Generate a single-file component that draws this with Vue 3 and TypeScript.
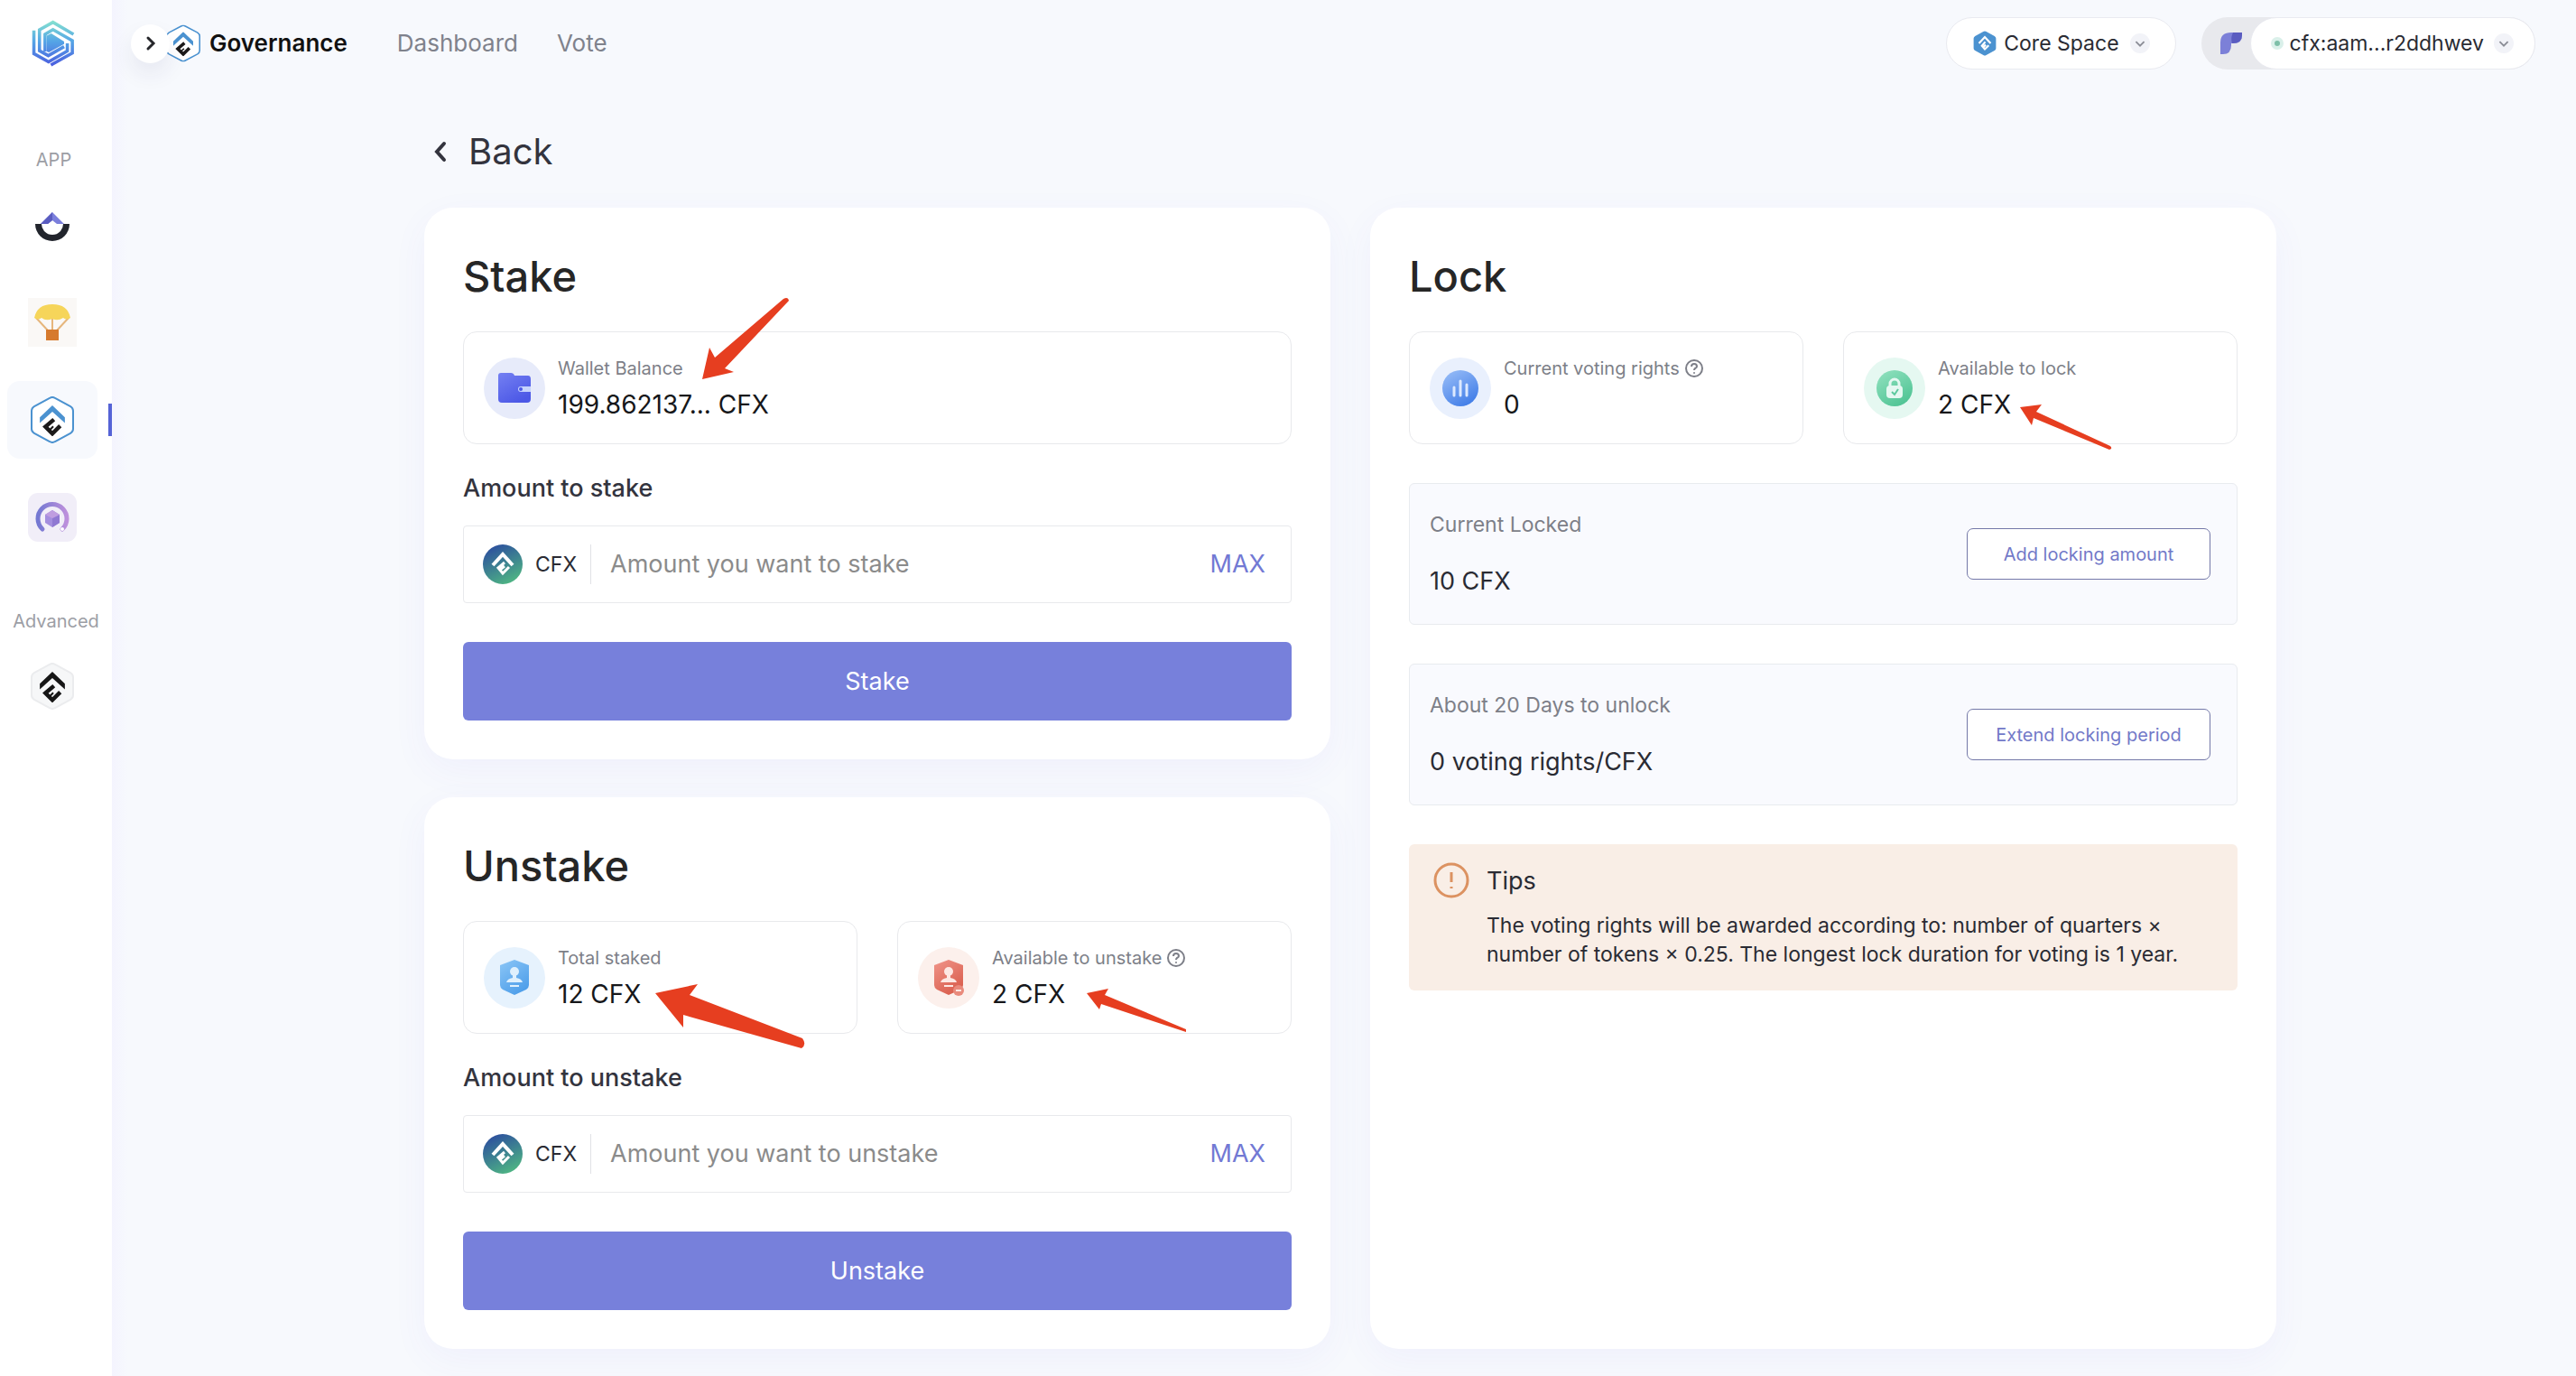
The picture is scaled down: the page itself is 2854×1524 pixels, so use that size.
<script setup lang="ts">
import { ref } from 'vue'

interface Panel {
  id: string
  title: string
  placeholder: string
}

const stakePanel: Panel = { id: 'stake', title: 'Stake', placeholder: 'Amount you want to stake' }
const unstakePanel: Panel = { id: 'unstake', title: 'Unstake', placeholder: 'Amount you want to unstake' }

const stakeAmount = ref('')
const unstakeAmount = ref('')

const lockRows = [
  { label: 'Current Locked', value: '10 CFX', action: 'Add locking amount' },
  { label: 'About 20 Days to unlock', value: '0 voting rights/CFX', action: 'Extend locking period' },
]
</script>

<template>
  <svg class="defs" width="0" height="0" aria-hidden="true">
    <defs>
      <linearGradient id="g-logo" gradientUnits="userSpaceOnUse" x1="128" y1="34" x2="128" y2="192">
        <stop offset="0" stop-color="#86e3cf" />
        <stop offset="0.45" stop-color="#55a5e6" />
        <stop offset="1" stop-color="#4a5ade" />
      </linearGradient>
      <linearGradient id="g-coin" x1="0.2" y1="0" x2="0.7" y2="1">
        <stop offset="0" stop-color="#2b4b9f" />
        <stop offset="1" stop-color="#4fb783" />
      </linearGradient>
      <linearGradient id="g-ring" x1="0" y1="0" x2="1" y2="0">
        <stop offset="0" stop-color="#7478d2" />
        <stop offset="1" stop-color="#bd90dc" />
      </linearGradient>
      <linearGradient id="g-wallet" x1="0" y1="0" x2="0.6" y2="1">
        <stop offset="0" stop-color="#7480f2" />
        <stop offset="1" stop-color="#4c58e6" />
      </linearGradient>
      <linearGradient id="g-blue" x1="0" y1="0" x2="0.6" y2="1">
        <stop offset="0" stop-color="#9cc0f8" />
        <stop offset="1" stop-color="#4580e8" />
      </linearGradient>
      <linearGradient id="g-green" x1="0" y1="0" x2="0.6" y2="1">
        <stop offset="0" stop-color="#93e2c0" />
        <stop offset="1" stop-color="#52c596" />
      </linearGradient>
      <linearGradient id="g-sky" x1="0" y1="0" x2="0.6" y2="1">
        <stop offset="0" stop-color="#8cc6f6" />
        <stop offset="1" stop-color="#4f9fea" />
      </linearGradient>
      <linearGradient id="g-red" x1="0" y1="0" x2="0.6" y2="1">
        <stop offset="0" stop-color="#f0958a" />
        <stop offset="1" stop-color="#da5f4e" />
      </linearGradient>
      <symbol id="mark" viewBox="0 0 80 98">
        <path class="roof" d="M0 38 40 0 80 38V56L40 20 0 56Z" />
        <path class="cee" d="M45 45 18 68 40 90 65 65" fill="none" stroke-width="13" />
        <path class="cee" d="M33 77 43 67" fill="none" stroke-width="6" />
      </symbol>
      <symbol id="hex" viewBox="0 0 48 52">
        <path d="M21 2Q24 0 27 2L44 11Q47 13 47 16V36Q47 39 44 41L27 50Q24 52 21 50L4 41Q1 39 1 36V16Q1 13 4 11Z" />
      </symbol>
      <symbol id="question" viewBox="0 0 20 20">
        <circle cx="10" cy="10" r="9" fill="none" stroke="#7d7f88" stroke-width="2" />
        <path d="M7 8Q7 5 10 5T13 8Q13 9 11 10Q10 11 10 12" fill="none" stroke="#7d7f88" stroke-width="2" />
        <circle cx="10" cy="15" r="1" fill="#7d7f88" />
      </symbol>
      <symbol id="chevron-disc" viewBox="0 0 24 24">
        <circle cx="12" cy="12" r="12" fill="#f2f3f8" />
        <path d="M7 10 12 15 17 10" fill="none" stroke="#8b8d96" stroke-width="2" />
      </symbol>
      <symbol id="coin" viewBox="0 0 44 44">
        <circle cx="22" cy="22" r="22" fill="url(#g-coin)" />
        <path d="M11 23 22 11 33 23" fill="none" stroke="#fff" stroke-width="4" />
        <path d="M24 20 17 26 22 32 29 25M19 28 24 24" fill="none" stroke="#fff" stroke-width="3" />
      </symbol>
    </defs>
  </svg>

  <div class="page">
    <aside class="sidebar">
      <a class="logo" href="#" aria-label="Home">
        <svg width="48" height="52" viewBox="56 32 146 160">
          <g fill="none" stroke="url(#g-logo)" stroke-width="11">
            <path d="M63 68V147L113 175 177 138V112" />
            <path d="M121 186 194 145V103L128 65 101 81V140" />
            <path d="M198 81 128 40 82 66V137L112 154 166 123" />
          </g>
          <path d="M107 140V86L122 78 166 106V114L114 143Z" fill="url(#g-logo)" />
        </svg>
      </a>
      <p class="group app-group">APP</p>
      <nav class="apps" aria-label="Apps">
        <a class="tile" href="#" aria-label="Web3 paywall">
          <svg width="38" height="40" viewBox="0 -6 38 40">
            <path d="M19 0 32 13H24L19 9 14 13H6Z" fill="#7b7fdc" />
            <path d="M19 0 6 13H14L19 9Z" fill="#5a5cc0" />
            <path d="M0 13H7A12 12 0 0 0 31 13H38A19 19 0 0 1 0 13Z" fill="#22252d" />
          </svg>
        </a>
        <a class="tile" href="#" aria-label="Airdrop">
          <svg width="54" height="54" viewBox="0 0 54 54">
            <rect width="54" height="54" fill="#faf8f6" />
            <path d="M9 22 22 36M45 22 32 36M27 22V37" fill="none" stroke="#e6b67c" stroke-width="2" />
            <path d="M7 22Q10 7 27 7T47 22Q43 25 39 22Q33 26 27 23Q20 26 15 22Q11 25 7 22Z" fill="#f6d55a" />
            <rect x="20" y="35" width="14" height="12" fill="#d67a2e" />
          </svg>
        </a>
        <a class="tile active" href="#" aria-label="Governance" aria-current="page">
          <svg width="48" height="52" viewBox="0 0 48 52">
            <use href="#hex" class="hex-blue" />
            <use href="#mark" class="mark-duo" x="10" y="10" width="28" height="34" />
          </svg>
        </a>
        <a class="tile" href="#" aria-label="Relayer">
          <svg width="54" height="54" viewBox="0 0 54 54">
            <rect width="54" height="54" rx="11" fill="#f1eef8" />
            <path d="M16 40A16 16 0 1 1 38 40" fill="none" stroke="url(#g-ring)" stroke-width="5" stroke-linecap="round" />
            <path d="M27 19 35 24V33L27 38 19 33V24Z" fill="#a48ede" />
            <path d="M27 28V38L35 33V24Z" fill="#8f78d2" />
            <path d="M27 19 35 24 27 28 19 24Z" fill="#bf9de0" />
            <circle cx="38" cy="40" r="2" fill="#fff" />
          </svg>
        </a>
      </nav>
      <p class="group advanced-group">Advanced</p>
      <nav aria-label="Advanced">
        <a class="tile" href="#" aria-label="Conflux">
          <svg width="48" height="52" viewBox="0 0 48 52">
            <use href="#hex" class="hex-gray" />
            <use href="#mark" class="mark-dark" x="10" y="10" width="28" height="34" />
          </svg>
        </a>
      </nav>
    </aside>

    <div class="main">
      <header class="topbar">
        <button class="expand" type="button" aria-label="Expand sidebar">
          <svg width="20" height="20" viewBox="0 0 20 20">
            <path d="M7 4 13 10 7 16" fill="none" stroke="#26272b" stroke-width="3" stroke-linecap="round" />
          </svg>
        </button>
        <svg class="brand-icon" width="38" height="42" viewBox="0 0 48 52">
          <use href="#hex" class="hex-blue" />
          <use href="#mark" class="mark-duo" x="10" y="10" width="28" height="34" />
        </svg>
        <span class="brand">Governance</span>
        <nav class="links" aria-label="Sections">
          <a href="#">Dashboard</a>
          <a href="#">Vote</a>
        </nav>
        <button class="pill space" type="button">
          <svg width="26" height="28" viewBox="0 0 48 52">
            <use href="#hex" class="hex-solid" />
            <path d="M12 26 24 13 36 26M25 23 18 31 24 38 32 30M21 34 26 29" fill="none" stroke="#fff" stroke-width="4" />
          </svg>
          <span>Core Space</span>
          <svg width="22" height="22"><use href="#chevron-disc" /></svg>
        </button>
        <div class="account">
          <svg class="fluent" width="24" height="24" viewBox="0 0 24 24">
            <path d="M0 24V11Q0 0 12 0H24V3Q24 12 15 12H12V14Q12 24 3 24Z" fill="#7c80d8" />
            <path d="M14 0H24V3Q24 12 13 12Q11 6 14 0Z" fill="#5a5cc0" />
          </svg>
          <button class="pill wallet" type="button">
            <span class="dot"></span>
            <span>cfx:aam...r2ddhwev</span>
            <svg width="22" height="22"><use href="#chevron-disc" /></svg>
          </button>
        </div>
      </header>

      <main class="content">
        <a class="back" href="#">
          <svg width="20" height="26" viewBox="0 0 20 26">
            <path d="M13 4 5 13 13 22" fill="none" stroke="#33343e" stroke-width="4" stroke-linecap="round" />
          </svg>
          <span>Back</span>
        </a>

        <div class="columns">
          <div class="stack">
            <section class="card">
              <h2>{{ stakePanel.title }}</h2>
              <div class="stats">
                <div class="stat">
                  <svg width="68" height="68" viewBox="0 0 68 68">
                    <circle cx="34" cy="34" r="34" fill="#e7ebfa" />
                    <path d="M16 20Q16 17 19 17H30Q33 17 34 20H49Q52 20 52 24V46Q52 50 48 50H20Q16 50 16 46Z" fill="url(#g-wallet)" />
                    <path d="M41 32H52V38H41A3 3 0 0 1 41 32Z" fill="#c6d3fc" />
                    <circle cx="41" cy="35" r="2" fill="#4c58e6" />
                  </svg>
                  <div class="stat-text">
                    <p class="stat-label">Wallet Balance</p>
                    <p class="stat-value">199.862137... CFX</p>
                  </div>
                  <svg class="arrow arrow-balance" width="100" height="94" viewBox="776 328 100 94">
                    <path d="M778 420 786 385 792 396 868 331Q873 328 874 333L803 408 813 412Z" />
                  </svg>
                </div>
              </div>
              <label class="field-label" :for="stakePanel.id">Amount to stake</label>
              <div class="field">
                <svg width="44" height="44"><use href="#coin" /></svg>
                <span class="unit">CFX</span>
                <input :id="stakePanel.id" v-model="stakeAmount" type="text" :placeholder="stakePanel.placeholder" />
                <button class="max" type="button">MAX</button>
              </div>
              <button class="submit" type="button">Stake</button>
            </section>

            <section class="card">
              <h2>{{ unstakePanel.title }}</h2>
              <div class="stats">
                <div class="stat">
                  <svg width="68" height="68" viewBox="0 0 68 68">
                    <circle cx="34" cy="34" r="34" fill="#e6f2fd" />
                    <path d="M34 14 50 20V42Q50 45 47 47L34 53 21 47Q18 45 18 42V20Z" fill="url(#g-sky)" />
                    <circle cx="34" cy="27" r="5" fill="#dff0fd" />
                    <path d="M32 30H36V34Q42 35 43 39H25Q26 35 32 34ZM29 42H39V44H29Z" fill="#dff0fd" />
                  </svg>
                  <div class="stat-text">
                    <p class="stat-label">Total staked</p>
                    <p class="stat-value">12 CFX</p>
                  </div>
                  <svg class="arrow arrow-total" width="168" height="74" viewBox="725 1090 168 74">
                    <path d="M726 1101 773 1091 764 1103 889 1151Q894 1158 888 1162L757 1125V1139Z" />
                  </svg>
                </div>
                <div class="stat">
                  <svg width="68" height="68" viewBox="0 0 68 68">
                    <circle cx="34" cy="34" r="34" fill="#fcf0ec" />
                    <path d="M34 14 50 20V42Q50 45 47 47L34 53 21 47Q18 45 18 42V20Z" fill="url(#g-red)" />
                    <circle cx="34" cy="27" r="5" fill="#fde8e3" />
                    <path d="M32 30H36V34Q42 35 43 39H25Q26 35 32 34ZM29 42H39V44H29Z" fill="#fde8e3" />
                    <circle cx="45" cy="48" r="6" fill="#e98a7c" />
                    <path d="M42 48H48" stroke="#fde8e3" stroke-width="2" />
                  </svg>
                  <div class="stat-text">
                    <p class="stat-label">Available to unstake <svg width="20" height="20"><use href="#question" /></svg></p>
                    <p class="stat-value">2 CFX</p>
                  </div>
                  <svg class="arrow arrow-unstake" width="112" height="50" viewBox="1203 1095 112 50">
                    <path d="M1204 1101 1228 1096 1224 1103 1314 1141V1144L1220 1113 1218 1119Z" />
                  </svg>
                </div>
              </div>
              <label class="field-label" :for="unstakePanel.id">Amount to unstake</label>
              <div class="field">
                <svg width="44" height="44"><use href="#coin" /></svg>
                <span class="unit">CFX</span>
                <input :id="unstakePanel.id" v-model="unstakeAmount" type="text" :placeholder="unstakePanel.placeholder" />
                <button class="max" type="button">MAX</button>
              </div>
              <button class="submit" type="button">Unstake</button>
            </section>
          </div>

          <section class="card">
            <h2>Lock</h2>
            <div class="stats">
              <div class="stat">
                <svg width="68" height="68" viewBox="0 0 68 68">
                  <circle cx="34" cy="34" r="34" fill="#e9f0fd" />
                  <circle cx="34" cy="34" r="20" fill="url(#g-blue)" />
                  <path d="M27 33V42M34 26V42M41 30V42" stroke="#dce9ff" stroke-width="3" stroke-linecap="round" />
                </svg>
                <div class="stat-text">
                  <p class="stat-label">Current voting rights <svg width="20" height="20"><use href="#question" /></svg></p>
                  <p class="stat-value">0</p>
                </div>
              </div>
              <div class="stat">
                <svg width="68" height="68" viewBox="0 0 68 68">
                  <circle cx="34" cy="34" r="34" fill="#e5f8f1" />
                  <circle cx="34" cy="34" r="20" fill="url(#g-green)" />
                  <path d="M29 32V29A5 5 0 0 1 39 29V32" fill="none" stroke="#e5f8f1" stroke-width="3" />
                  <rect x="25" y="31" width="18" height="14" rx="4" fill="#e5f8f1" />
                  <path d="M31 38 34 41 38 35" fill="none" stroke="#5cca9e" stroke-width="2" />
                </svg>
                <div class="stat-text">
                  <p class="stat-label">Available to lock</p>
                  <p class="stat-value">2 CFX</p>
                </div>
                <svg class="arrow arrow-lock" width="104" height="52" viewBox="2237 447 104 52">
                  <path d="M2238 451 2262 448 2256 456 2338 494Q2341 497 2337 498L2253 463 2251 471Z" />
                </svg>
              </div>
            </div>

            <div v-for="row in lockRows" :key="row.label" class="lock-row">
              <div>
                <p class="lock-label">{{ row.label }}</p>
                <p class="lock-value">{{ row.value }}</p>
              </div>
              <button class="outline" type="button">{{ row.action }}</button>
            </div>

            <div class="tips">
              <svg width="40" height="40" viewBox="0 0 40 40">
                <circle cx="20" cy="20" r="18" fill="none" stroke="#dc9261" stroke-width="3" />
                <path d="M20 11V22M20 27V29" stroke="#dc9261" stroke-width="3" />
              </svg>
              <div>
                <h3>Tips</h3>
                <p>The voting rights will be awarded according to: number of quarters × number of tokens × 0.25. The longest lock duration for voting is 1 year.</p>
              </div>
            </div>
          </section>
        </div>
      </main>
    </div>
  </div>
</template>

<style>
body {
  background: #f7f9fd;
}
</style>

<style scoped>
.page {
  display: flex;
  min-height: 100vh;
  font-family: Inter, "Liberation Sans", sans-serif;
  color: #2a2b33;
}
.page * {
  box-sizing: border-box;
}
.defs {
  position: absolute;
}
svg {
  display: block;
  flex: none;
}
p,
h2,
h3 {
  margin: 0;
}
button,
input {
  font: inherit;
  color: inherit;
  border: 0;
  padding: 0;
  background: none;
}
button {
  cursor: pointer;
}
a {
  color: inherit;
  text-decoration: none;
}

.mark-duo {
  fill: #4b92d0;
  stroke: #1c1a1a;
}
.mark-dark {
  fill: #161616;
  stroke: #161616;
}
.roof {
  stroke: none;
}
.hex-blue {
  fill: #fff;
  stroke: #4b92d0;
  stroke-width: 2px;
}
.hex-gray {
  fill: #f6f7f8;
  stroke: #ebecee;
  stroke-width: 2px;
}
.hex-solid {
  fill: #4b92d0;
}

.sidebar {
  flex: none;
  width: 124px;
  background: #fff;
}
.logo {
  display: block;
  padding: 22px 0 0 35px;
}
.group {
  font-size: 20px;
  line-height: 28px;
  color: #9c9ea5;
  text-align: center;
}
.app-group {
  padding-right: 5px;
  margin-top: 89px;
}
.advanced-group {
  margin-top: 58px;
}
.tile {
  position: relative;
  display: flex;
  align-items: center;
  justify-content: center;
  width: 100px;
  height: 86px;
  margin-left: 8px;
  border-radius: 14px;
}
.apps {
  display: flex;
  flex-direction: column;
  gap: 22px;
  margin-top: 15px;
}
.advanced-group + nav {
  margin-top: 15px;
}
.active {
  background: #f7f9fd;
}
.active::after {
  content: "";
  position: absolute;
  top: 25px;
  right: -16px;
  width: 4px;
  height: 36px;
  background: #5563d6;
}

.main {
  flex: 1;
  min-width: 0;
  padding-left: 14px;
  background: linear-gradient(90deg, #f4f4fe, #f7f9fd 18px);
}
.topbar {
  display: flex;
  align-items: center;
  height: 96px;
  padding: 0 45px 0 7px;
}
.expand {
  z-index: 1;
  display: flex;
  align-items: center;
  justify-content: center;
  width: 43px;
  height: 43px;
  border-radius: 50%;
  background: #fff;
  box-shadow: 0 12px 24px rgba(40, 40, 100, 0.08);
}
.brand-icon {
  margin-left: -4px;
}
.brand {
  margin-left: 10px;
  font-size: 26px;
  font-weight: 600;
  line-height: 40px;
  color: #111;
}
.links {
  display: flex;
  gap: 43px;
  margin: 0 auto 0 55px;
  font-size: 26px;
  line-height: 40px;
  color: #7f828c;
}
.pill {
  display: flex;
  align-items: center;
  height: 58px;
  border: 1px solid #e9eaf0;
  border-radius: 29px;
  background: #fff;
  font-size: 23px;
  line-height: 32px;
}
.space {
  padding: 0 28px 0 29px;
}
.space span {
  margin: 0 12px 0 8px;
}
.account {
  display: flex;
  align-items: center;
  margin-left: 28px;
  border-radius: 29px;
  background: #e8e9ed;
}
.fluent {
  margin: 0 9px 0 21px;
}
.wallet {
  padding: 0 23px 0 22px;
}
.wallet span + span {
  margin: 0 11px 0 7px;
}
.dot {
  width: 14px;
  height: 14px;
  border: 4px solid #daf0ea;
  border-radius: 50%;
  background: #7dbfa8;
}

.content {
  max-width: 2052px;
  margin: 0 auto;
  padding-bottom: 30px;
}
.back {
  display: inline-flex;
  align-items: center;
  gap: 20px;
  margin: 41px 0 31px 9px;
  font-size: 40px;
  line-height: 62px;
  color: #33343e;
}
.columns {
  display: grid;
  grid-template-columns: 1fr 1fr;
  gap: 44px;
}
.stack {
  display: flex;
  flex-direction: column;
  gap: 42px;
}
.card {
  padding: 43px;
  border-radius: 32px;
  background: #fff;
  box-shadow: 0 12px 40px rgba(90, 80, 240, 0.05);
}
.card h2 {
  margin-bottom: 28px;
  font-size: 47px;
  font-weight: 500;
  line-height: 66px;
  color: #262626;
}
.stats {
  display: grid;
  grid-auto-flow: column;
  grid-auto-columns: 1fr;
  gap: 44px;
}
.stat {
  position: relative;
  display: flex;
  align-items: center;
  gap: 14px;
  height: 125px;
  padding-left: 22px;
  border: 1px solid #e8e9ec;
  border-radius: 15px;
}
.stat-text {
  padding-top: 1px;
}
.stat-label {
  display: flex;
  align-items: center;
  gap: 6px;
  font-size: 20px;
  line-height: 32px;
  color: #7d7f88;
}
.stat-value {
  margin-top: 4px;
  font-size: 28px;
  line-height: 40px;
  color: #16171a;
}
.arrow {
  position: absolute;
  z-index: 1;
  fill: #e63e20;
}
.arrow-balance {
  left: 262px;
  top: -40px;
}
.arrow-total {
  left: 211px;
  top: 68px;
}
.arrow-unstake {
  left: 208px;
  top: 73px;
}
.arrow-lock {
  left: 194px;
  top: 79px;
}
.field-label {
  display: block;
  margin: 32px 0 24px;
  font-size: 27px;
  font-weight: 500;
  line-height: 34px;
  color: #33343e;
}
.field {
  display: flex;
  align-items: center;
  height: 86px;
  padding: 0 28px 0 21px;
  border: 1px solid #e8e9ec;
  border-radius: 4px;
}
.unit {
  width: 76px;
  padding-left: 14px;
  font-size: 23px;
  line-height: 44px;
  border-right: 1px solid #e1e2e6;
}
.field input {
  flex: 1;
  min-width: 0;
  padding-left: 21px;
  font-size: 27px;
  line-height: 40px;
  outline: 0;
}
.field input::placeholder {
  color: #8b8b8b;
  opacity: 1;
}
.max {
  font-size: 27px;
  line-height: 40px;
  color: #7279d4;
}
.submit {
  display: block;
  width: 100%;
  height: 87px;
  margin-top: 43px;
  border-radius: 6px;
  background: #7780db;
  font-size: 27px;
  color: #fff;
}
.lock-row {
  display: flex;
  align-items: center;
  justify-content: space-between;
  height: 157px;
  margin-top: 43px;
  padding: 0 29px 0 22px;
  border: 1px solid #e8ebef;
  border-radius: 6px;
  background: #f9fafe;
}
.lock-label {
  font-size: 23px;
  line-height: 34px;
  color: #7d7f88;
}
.lock-value {
  margin-top: 26px;
  font-size: 27px;
  line-height: 40px;
}
.outline {
  width: 270px;
  height: 57px;
  border: 1px solid #7478a8;
  border-radius: 7px;
  background: #fff;
  font-size: 20px;
  color: #7279c8;
}
.tips {
  display: flex;
  gap: 19px;
  margin-top: 43px;
  padding: 20px 27px 24px;
  border-radius: 6px;
  background: #f9eee6;
}
.tips h3 {
  font-size: 27px;
  font-weight: 400;
  line-height: 42px;
}
.tips p {
  margin-top: 12px;
  font-size: 23px;
  line-height: 32px;
}
</style>
